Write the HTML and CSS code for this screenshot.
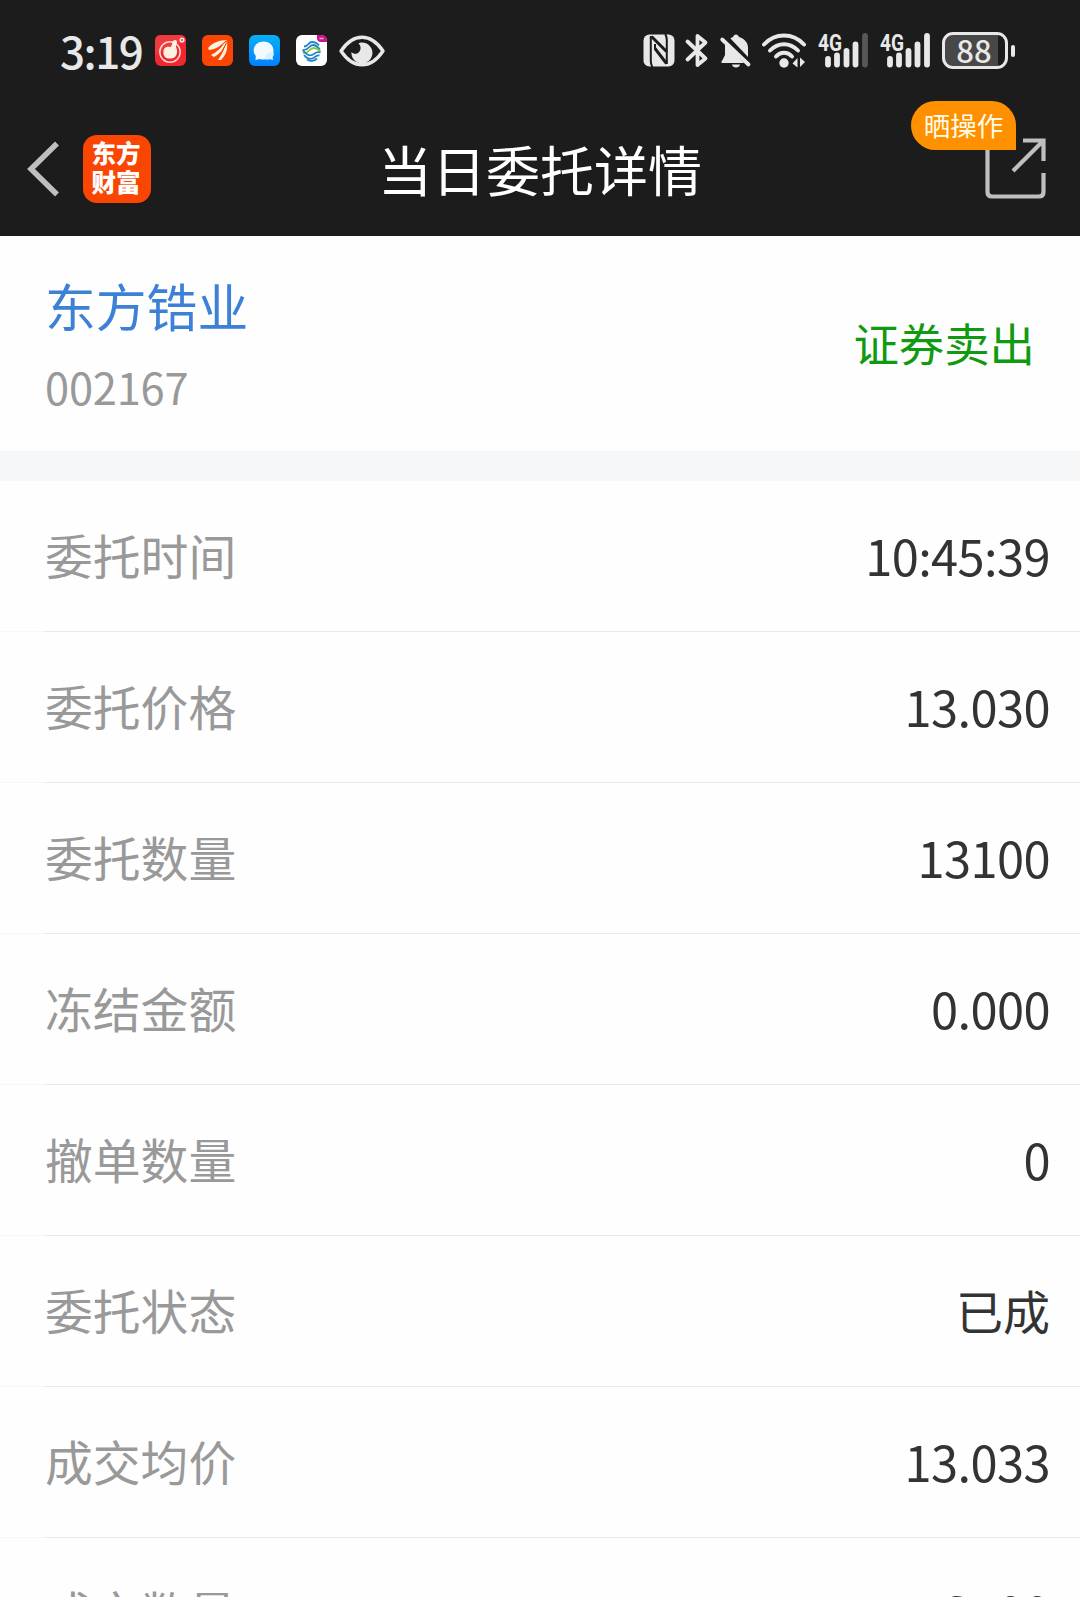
FILE: index.html
```
<!DOCTYPE HTML>
<html lang="zh-CN">
    <head>
        <meta charset="UTF-8">
        <title>当日委托详情</title>
        <link rel="stylesheet" href="styles.css">
    </head>
    <body>
        <div id="wrap">
            <div class="top">
                <!-- 状态栏 -->
                <div class="status">
                    <div class="status-left">
                        <span class="time">3:19</span>
                        <svg class="app" viewBox="0 0 31 31">
                            <rect width="31" height="31" rx="6" fill="#ee2730"/>
                            <path d="M0 6q0-6 6-6h19q6 0 6 6L0 20z" fill="#f03a40"/>
                            <circle cx="15" cy="17" r="10.2" fill="none" stroke="#ffd9d2" stroke-width="1.5"/>
                            <path d="M9 14c2-3 5-2 7-2l2-6c2-2 4-1 4 1l-1 5c2 4 1 8-1 10-3 2-8 2-10 0s-2-5-1-8z" fill="#fff0df"/>
                            <circle cx="27" cy="5" r="1.8" fill="none" stroke="#ffe1dc" stroke-width="1.5"/>
                        </svg>
                        <svg class="app" viewBox="0 0 31 31">
                            <rect width="31" height="31" rx="6" fill="#fb4503"/>
                            <g fill="#fff1df">
                                <path d="M6 13C10 8 17 5 25 5 21 10 15 14 7 15z"/>
                                <path d="M9 20c6-3 11-8 15-14-1 7-5 12-12 16z"/>
                                <path d="M16 25c4-6 7-12 9-19 1 8-1 14-6 19z"/>
                            </g>
                            <path d="M8.500 17.500Q17 13 24 6M14.500 24Q20 17 24.500 8" fill="none" stroke="#fb4503" stroke-width="1"/>
                        </svg>
                        <svg class="app" viewBox="0 0 31 31">
                            <defs>
                                <linearGradient id="msg" x1="0" y1="0" x2="0" y2="1">
                                    <stop offset="0" stop-color="#06b0f6"/>
                                    <stop offset="1" stop-color="#0280ff"/>
                                </linearGradient>
                            </defs>
                            <rect width="31" height="31" rx="6" fill="url(#msg)"/>
                            <path d="M14.500 6.500c6 0 10 4 10 9s-4 9-10 9c-1.500 0-2.500-.2-3.800-.6L6.500 25l.3-4C5.300 19 4.700 17.500 4.700 15.500c0-5 4-9 9.800-9z" fill="#f1fbff"/>
                            <path d="M16 24.300c0-4 3-7.500 8.300-7.500 1 2.500.3 4-.6 5.200l.3 3-3-.7c-1.500.5-3.500.5-5 0z" fill="#d8f1ff"/>
                        </svg>
                        <svg class="app" viewBox="0 0 31 31">
                            <rect width="31" height="31" rx="6" fill="#fff"/>
                            <path d="M21 0h4q6 0 6 6v1h-6q-4 0-4-4z" fill="#c8148c"/>
                            <path d="M23.500 3.500h4" stroke="#f0a8d8" stroke-width="1.500"/>
                            <g fill="none" stroke-width="1.800">
                                <path d="M8 11.500c5 0 4-4.500 8-4.500 3 0 5 1 7 3.500" stroke="#2285c8"/>
                                <path d="M6.500 15c7 1 6-5.500 11-5 2 .3 4 1.500 6.500 4.500" stroke="#2285c8"/>
                                <path d="M7 18c7 1 6-5.500 11-5 2 .3 4 1 6.500 3.500" stroke="#8cc63f"/>
                                <path d="M7 15.500c3 3.500 6 6 9 4.500 3-1.500 4-4 8.500-2.500" stroke="#2285c8"/>
                                <path d="M8 20c4 5 7 4.500 9.500 3 2-1.500 3-3 6-2.500" stroke="#2285c8"/>
                                <path d="M11 24.500c3 2 7 2 10-1" stroke="#2285c8"/>
                            </g>
                        </svg>
                        <svg class="eye" viewBox="0 0 46 32">
                            <path d="M2 16C8 7 15 2.200 23 2.200S38 7 44 16C38 25 31 29.800 23 29.800S8 25 2 16z" fill="none" stroke="#e8e8e8" stroke-width="3.400" stroke-linejoin="round"/>
                            <path d="M23 7.500a10.500 10.500 0 1 1-10.500 9.500c2 2.500 6 2.500 8-.5 2-3 1-6.500-1-8 1-.7 2-1 3.500-1z" fill="#e8e8e8"/>
                        </svg>
                    </div>
                    <div class="status-right">
                        <svg class="nfc" viewBox="0 0 32 33">
                            <rect x="0.500" y="0.500" width="31" height="32" rx="6" fill="#e8e8e8"/>
                            <g fill="none" stroke="#1c1c1c">
                                <path d="M7.800 2v25q0 3 1.500 6M23.800 30V6q0-3-1.500-6" stroke-width="2"/>
                                <path d="M8.500 2.500L23.500 17.500M12 14.500L23.500 29.500" stroke-width="3"/>
                                <path d="M12 10v5" stroke-width="2"/>
                            </g>
                        </svg>
                        <svg class="bt" viewBox="0 0 24 35">
                            <path d="M2.500 8.500L20.500 25.500 12.500 32V3L20.500 9.500 2.500 26.500" fill="none" stroke="#e8e8e8" stroke-width="3.800" stroke-linecap="round" stroke-linejoin="round"/>
                        </svg>
                        <svg class="bell" viewBox="0 0 31 34">
                            <path d="M5 8L24 29H2.500c-1.500 0-1.500-2 0-3L5 21zM10.500 4.500c1-1 2-1.300 2.500-1.500 1-3.500 5-3.500 6 0 6 2 9 6 9 11v9z" fill="#e8e8e8"/>
                            <path d="M12 30.500h8c-.5 4-7.500 4-8 0z" fill="#e8e8e8"/>
                            <path d="M5.500 4L31 28" stroke="#1c1c1c" stroke-width="2.400"/>
                            <path d="M2.200 5.500L28.500 30.500" stroke="#e8e8e8" stroke-width="3.800" stroke-linecap="round"/>
                        </svg>
                        <svg class="wifi" viewBox="0 0 44 35">
                            <g fill="none" stroke="#e8e8e8" stroke-width="4" stroke-linecap="round">
                                <path d="M2 11.500C13-.5 31-.5 42 11.500"/>
                                <path d="M8 17.500c8-8.500 20-8.500 28 0"/>
                                <path d="M14 23.500c4.500-5 11.500-5 16 0"/>
                            </g>
                            <circle cx="22" cy="30" r="4.700" fill="#e8e8e8"/>
                            <path d="M35.500 25v9.500L30.500 30.500zM38 24.500v9.500l5-5z" fill="#e8e8e8"/>
                        </svg>
                        <svg class="signal" viewBox="0 0 50 35">
                            <text x="0" y="17.500" textLength="24" lengthAdjust="spacingAndGlyphs">4G</text>
                            <path d="M10 26v5.500M19 22.500v9M28.500 18v13.500M37.500 11.500v20" class="bar"/>
                            <path d="M47 3v28.500" class="bar off"/>
                        </svg>
                        <svg class="signal" viewBox="0 0 50 35">
                            <text x="0" y="17.500" textLength="24" lengthAdjust="spacingAndGlyphs">4G</text>
                            <path d="M10 26v5.500M19 22.500v9M28.500 18v13.500M37.500 11.500v20M47 3v28.500" class="bar"/>
                        </svg>
                        <div class="battery"><span>88</span></div>
                        <i class="nub"></i>
                    </div>
                </div>
                <!-- 标题栏 -->
                <div class="nav">
                    <div class="nav-left">
                        <svg class="back" viewBox="0 0 34 56">
                            <path d="M32 2.500L6 28 32 53.500" fill="none" stroke="#bfbfbf" stroke-width="5.500"/>
                        </svg>
                        <div class="logo"><span>东方</span><span>财富</span></div>
                    </div>
                    <h1>当日委托详情</h1>
                    <div class="share">
                        <svg viewBox="0 0 61 61">
                            <g fill="none" stroke="#bfbfbf" stroke-width="4.200">
                                <path d="M2.500 6v48q0 4.500 4.500 4.500h47q4.500 0 4.500-4.500V35"/>
                                <path d="M38 2.500h20.500V23M58 3L28 33"/>
                            </g>
                        </svg>
                        <span class="tip">晒操作</span>
                    </div>
                </div>
            </div>

            <div class="stock">
                <div>
                    <p class="name">东方锆业</p>
                    <p class="code">002167</p>
                </div>
                <p class="type">证券卖出</p>
            </div>

            <ul class="list">
                <li><span>委托时间</span><b>10:45:39</b></li>
                <li><span>委托价格</span><b>13.030</b></li>
                <li><span>委托数量</span><b>13100</b></li>
                <li><span>冻结金额</span><b>0.000</b></li>
                <li><span>撤单数量</span><b>0</b></li>
                <li><span>委托状态</span><b class="cn">已成</b></li>
                <li><span>成交均价</span><b>13.033</b></li>
                <li><span>成交数量</span><b>13100</b></li>
            </ul>
        </div>
    </body>
</html>
```
FILE: styles.css
```
body{margin:0;font-family: "Noto Sans CJK SC",sans-serif;}
p,h1,ul,li{margin:0;padding:0;list-style:none;}
svg{display: block;flex: none;overflow: visible;}
#wrap{
    width: 1080px;
    height: 1597px;
    overflow: hidden;
    background: #fefefe;
}
.top{
    height: 236px;
    background: #1c1c1c;
}
/* 状态栏 */
.status{
    display: flex;
    justify-content: space-between;
    height: 101px;
    box-sizing: border-box;
    padding: 0 65px 0 60px;
    color: #e8e8e8;
}
.status-left,.status-right{
    display: flex;
    align-items: center;
}
.time{
    width: 95px;
    font-size: 44px;
    line-height: 99px;
    font-weight: 500;
    letter-spacing: -1.5px;
}
.app{
    width: 31px;
    height: 31px;
    margin-right: 16px;
}
.eye{
    width: 46px;
    height: 32px;
    margin-left: -4px;
}
.nfc{
    width: 32px;
    height: 33px;
    margin-right: 10px;
}
.bt{
    width: 24px;
    height: 35px;
    margin-right: 11px;
}
.bell{
    width: 31px;
    height: 34px;
    margin-right: 11px;
}
.wifi{
    width: 44px;
    height: 35px;
    margin-right: 12px;
}
.signal{
    width: 50px;
    height: 35px;
    margin-right: 12px;
}
.signal text{
    font-family: Roboto,sans-serif;
    font-size: 23px;
    font-weight: 700;
    fill: #e8e8e8;
}
.bar{
    fill: none;
    stroke: #e8e8e8;
    stroke-width: 5.8;
    stroke-linecap: round;
}
.off{stroke: #575757;}
.battery{
    width: 66px;
    height: 37px;
    box-sizing: border-box;
    border: 3px solid #e8e8e8;
    border-radius: 11px;
    background: linear-gradient(to right,#484848 53px,#1c1c1c 53px);
    font-size: 31px;
    line-height: 31px;
    font-weight: 500;
    text-align: center;
}
.battery span{
    display: block;
    margin: -1px 2px 0 0;
}
.nub{
    width: 4px;
    height: 12px;
    margin-left: 3px;
    border-radius: 2px;
    background: #e8e8e8;
}
/* 标题栏 */
.nav{
    display: flex;
    align-items: center;
    justify-content: space-between;
    height: 135px;
    padding: 0 34px 0 25px;
}
.nav-left{
    display: flex;
    align-items: center;
    width: 200px;
}
.back{
    width: 34px;
    height: 56px;
    margin-right: 24px;
}
.logo{
    width: 68px;
    height: 68px;
    box-sizing: border-box;
    padding-top: 3px;
    border-radius: 14px;
    background: #fb4503;
    color: #fff;
    font-size: 24.5px;
    font-weight: 900;
    line-height: 29px;
    text-align: center;
}
.logo span{display: block;margin-right: 2px;}
.nav h1{
    font-size: 54px;
    line-height: 80px;
    font-weight: 400;
    color: #fff;
}
.share{
    position: relative;
    display: flex;
    justify-content: flex-end;
    width: 191px;
}
.share svg{
    width: 61px;
    height: 61px;
}
.tip{
    position: absolute;
    right: 30px;
    top: -37px;
    width: 105px;
    height: 49px;
    border-radius: 25px 25px 0 25px;
    background: #ff9100;
    color: #fffbe8;
    font-size: 26.5px;
    line-height: 48px;
    text-align: center;
}
/* 股票信息 */
.stock{
    display: flex;
    justify-content: space-between;
    align-items: center;
    height: 215px;
    padding: 0 45px;
    border-bottom: 30px solid #f6f7f9;
}
.name{
    padding-top: 2px;
    font-size: 50.8px;
    line-height: 82px;
    color: #3c81d6;
}
.code{
    font-size: 43.4px;
    line-height: 80px;
    letter-spacing: -0.2px;
    color: #999;
}
.type{
    margin-bottom: 4px;
    font-size: 45.4px;
    color: #0f9a0f;
}
/* 委托明细 */
.list li{
    display: flex;
    justify-content: space-between;
    align-items: center;
    height: 150px;
    padding: 0 30px 0 45px;
    border-bottom: 1px solid;
    border-image: linear-gradient(to right,#f8f8f8 45px,#e9e9e9 45px) 1;
    font-size: 47.8px;
    color: #999;
}
.list span,.list b{margin-bottom: 4px;}
.list b{
    font-size: 48.8px;
    font-weight: 400;
    letter-spacing: -0.6px;
    color: #333;
}
.list b.cn{font-size: 47px;letter-spacing: 0;}
```
